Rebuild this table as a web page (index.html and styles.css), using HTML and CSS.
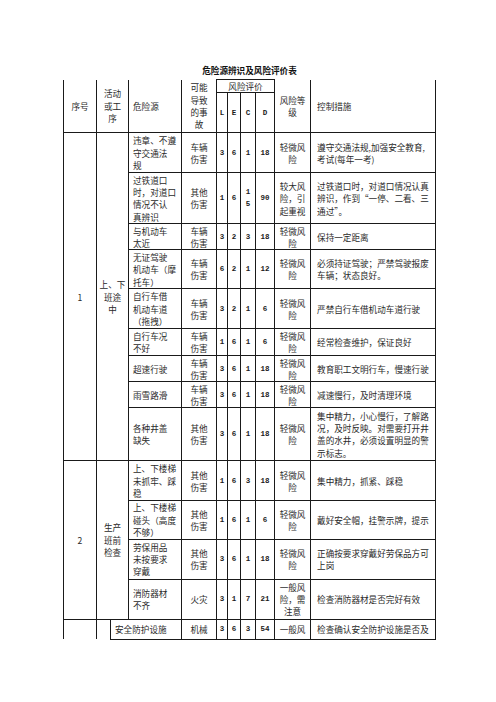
FILE: index.html
```html
<!DOCTYPE html>
<html lang="zh">
<head>
<meta charset="utf-8">
<title>危险源辨识及风险评价表</title>
<link rel="stylesheet" href="styles.css">
</head>
<body>
<div class="page">
  <div class="title">危险源辨识及风险评价表</div>
  <table class="sheet">
    <colgroup>
      <col class="c1"><col class="c2"><col class="c3"><col class="c4"><col class="c5"><col class="c6"><col class="c7"><col class="c8"><col class="c9"><col class="c10"><col class="c11">
    </colgroup>
    <tr class="ha">
      <td class="nt" rowspan="2">序号</td>
      <td class="nt" rowspan="2" colspan="2">活动<br>或工<br>序</td>
      <td class="nt l" rowspan="2">危险源</td>
      <td class="nt" rowspan="2">可能<br>导致<br>的事<br>故</td>
      <td colspan="4">风险评价</td>
      <td class="nt" rowspan="2">风险等<br>级</td>
      <td class="nt m" rowspan="2">控制措施</td>
    </tr>
    <tr class="hb">
      <td class="n">L</td><td class="n">E</td><td class="n">C</td><td class="n">D</td>
    </tr>

    <tr class="h40">
      <td rowspan="9">1</td>
      <td rowspan="9" colspan="2">上、下<br>班途<br>中</td>
      <td class="l">违章、不遵<br>守交通法<br>规</td>
      <td>车辆<br>伤害</td>
      <td class="n">3</td><td class="n">6</td><td class="n">1</td><td class="n">18</td>
      <td>轻微风<br>险</td>
      <td class="m">遵守交通法规,加强安全教育,<br>考试(每年一考)</td>
    </tr>
    <tr class="h51">
      <td class="l">过铁道口<br>时，对道口<br>情况不认<br>真辨识</td>
      <td>其他<br>伤害</td>
      <td class="n">1</td><td class="n">6</td><td class="n">1<br>5</td><td class="n">90</td>
      <td>较大风<br>险，引<br>起重视</td>
      <td class="m">过铁道口时，对道口情况认真<br>辨识，作到“一停、二看、三<br>通过”。</td>
    </tr>
    <tr class="h26">
      <td class="l">与机动车<br>太近</td>
      <td>车辆<br>伤害</td>
      <td class="n">3</td><td class="n">2</td><td class="n">3</td><td class="n">18</td>
      <td>轻微风<br>险</td>
      <td class="m">保持一定距离</td>
    </tr>
    <tr class="h39">
      <td class="l">无证驾驶<br>机动车（摩<br>托车）</td>
      <td>车辆<br>伤害</td>
      <td class="n">6</td><td class="n">2</td><td class="n">1</td><td class="n">12</td>
      <td>轻微风<br>险</td>
      <td class="m">必须持证驾驶；严禁驾驶报废<br>车辆；状态良好。</td>
    </tr>
    <tr class="h40">
      <td class="l">自行车借<br>机动车道<br>（拖拽）</td>
      <td>车辆<br>伤害</td>
      <td class="n">3</td><td class="n">2</td><td class="n">1</td><td class="n">6</td>
      <td>轻微风<br>险</td>
      <td class="m">严禁自行车借机动车道行驶</td>
    </tr>
    <tr class="h27">
      <td class="l">自行车况<br>不好</td>
      <td>车辆<br>伤害</td>
      <td class="n">1</td><td class="n">6</td><td class="n">1</td><td class="n">6</td>
      <td>轻微风<br>险</td>
      <td class="m">经常检查维护，保证良好</td>
    </tr>
    <tr class="h26">
      <td class="l">超速行驶</td>
      <td>车辆<br>伤害</td>
      <td class="n">3</td><td class="n">6</td><td class="n">1</td><td class="n">18</td>
      <td>轻微风<br>险</td>
      <td class="m">教育职工文明行车，慢速行驶</td>
    </tr>
    <tr class="h26">
      <td class="l">雨雪路滑</td>
      <td>车辆<br>伤害</td>
      <td class="n">3</td><td class="n">6</td><td class="n">1</td><td class="n">18</td>
      <td>轻微风<br>险</td>
      <td class="m">减速慢行，及时清理环境</td>
    </tr>
    <tr class="h53">
      <td class="l">各种井盖<br>缺失</td>
      <td>其他<br>伤害</td>
      <td class="n">3</td><td class="n">6</td><td class="n">1</td><td class="n">18</td>
      <td>轻微风<br>险</td>
      <td class="m">集中精力，小心慢行，了解路<br>况，及时反映。对需要打开井<br>盖的水井，必须设置明显的警<br>示标志。</td>
    </tr>

    <tr class="h40">
      <td rowspan="4">2</td>
      <td rowspan="4" colspan="2">生产<br>班前<br>检查</td>
      <td class="l">上、下楼梯<br>未抓牢、踩<br>稳</td>
      <td>其他<br>伤害</td>
      <td class="n">1</td><td class="n">6</td><td class="n">3</td><td class="n">18</td>
      <td>轻微风<br>险</td>
      <td class="m">集中精力，抓紧、踩稳</td>
    </tr>
    <tr class="h38">
      <td class="l">上、下楼梯<br>碰头（高度<br>不够）</td>
      <td>其他<br>伤害</td>
      <td class="n">1</td><td class="n">6</td><td class="n">1</td><td class="n">6</td>
      <td>轻微风<br>险</td>
      <td class="m">戴好安全帽，挂警示牌，提示</td>
    </tr>
    <tr class="h40">
      <td class="l">劳保用品<br>未按要求<br>穿戴</td>
      <td>其他<br>伤害</td>
      <td class="n">3</td><td class="n">6</td><td class="n">1</td><td class="n">18</td>
      <td>轻微风<br>险</td>
      <td class="m">正确按要求穿戴好劳保品方可<br>上岗</td>
    </tr>
    <tr class="h40">
      <td class="l">消防器材<br>不齐</td>
      <td>火灾</td>
      <td class="n">3</td><td class="n">1</td><td class="n">7</td><td class="n">21</td>
      <td>一般风<br>险，需<br>注意</td>
      <td class="m">检查消防器材是否完好有效</td>
    </tr>

    <tr class="h20">
      <td class="nb"></td>
      <td class="nb"></td>
      <td class="l" colspan="2">安全防护设施</td>
      <td>机械</td>
      <td class="n">3</td><td class="n">6</td><td class="n">3</td><td class="n">54</td>
      <td>一般风</td>
      <td class="m">检查确认安全防护设施是否及</td>
    </tr>
  </table>
</div>
</body>
</html>
```

FILE: styles.css
```css
html, body {
  margin: 0;
  padding: 0;
  background: #ffffff;
}

body {
  font-family: "Noto Sans CJK SC", "Noto Sans CJK JP", sans-serif;
  font-size: 8.6px;
  color: #2a2a2a;
}

.page {
  width: 373px;
  margin-left: 63px;
  padding-top: 64px;
}

.title {
  text-align: center;
  font-weight: bold;
  line-height: 12px;
  height: 12px;
  margin-bottom: 3px;
  color: #111111;
}

.sheet {
  border-collapse: collapse;
  table-layout: fixed;
  width: 373px;
}

.c1 { width: 33px; }
.c2 { width: 14px; }
.c3 { width: 18px; }
.c4 { width: 53px; }
.c5 { width: 35px; }
.c6 { width: 11px; }
.c7 { width: 13px; }
.c8 { width: 15px; }
.c9 { width: 19px; }
.c10 { width: 36px; }
.c11 { width: 125px; }

.sheet td {
  border: 1px solid #1a1a1a;
  padding: 0;
  line-height: 12.4px;
  text-align: center;
  vertical-align: middle;
  white-space: nowrap;
  overflow: hidden;
}

.sheet td.nt { border-top: none; }
.sheet td.nb { border-bottom: none; }

.sheet td.l {
  text-align: left;
  padding-left: 4px;
}

.sheet td.m {
  text-align: left;
  padding-left: 6px;
}

.sheet td.n {
  font-family: "Liberation Mono", monospace;
  font-weight: bold;
  font-size: 7.5px;
  color: #1a1a1a;
}

.ha { height: 13px; }
.hb { height: 40px; }
.h20 { height: 20px; }
.h26 { height: 26px; }
.h27 { height: 27px; }
.h38 { height: 38px; }
.h39 { height: 39px; }
.h40 { height: 40px; }
.h51 { height: 51px; }
.h53 { height: 53px; }
```
